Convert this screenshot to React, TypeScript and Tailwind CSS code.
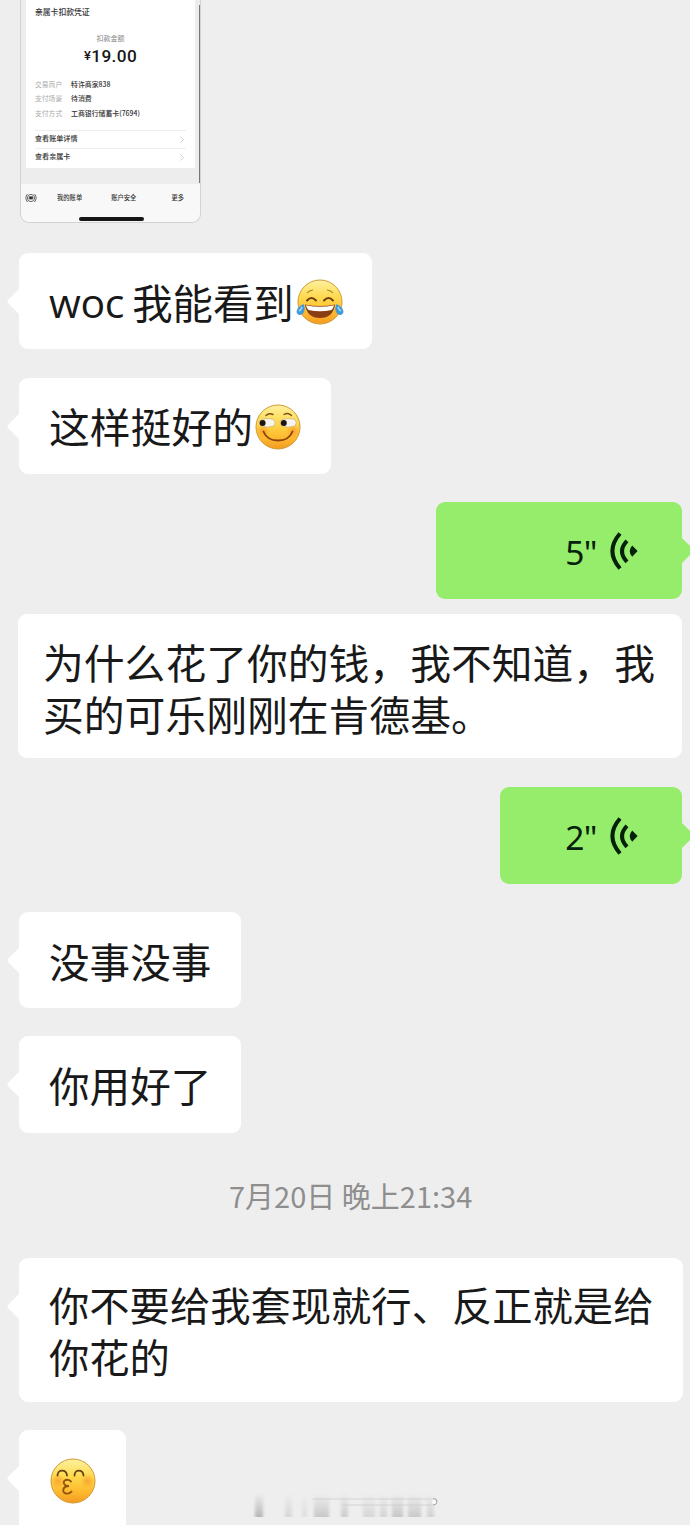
import type { ReactNode } from "react";

const rows = [
  { label: "交易商户", value: "特许商家838" },
  { label: "支付场景", value: "待消费" },
  { label: "支付方式", value: "工商银行储蓄卡(7694)" },
];

const links = ["查看账单详情", "查看亲属卡"];

function LeftBubble({
  children,
  className = "",
  tail = true,
}: {
  children: ReactNode;
  className?: string;
  tail?: boolean;
}) {
  return (
    <div
      className={[
        "relative shrink-0 rounded-[9px] bg-white leading-[52px] text-[#191919]",
        className,
      ].join(" ")}
    >
      {tail && (
        <svg
          className="absolute -left-3 top-[35px]"
          width="13"
          height="28"
          viewBox="0 0 13 28"
        >
          <path d="M13 0 L1.5 11.5 Q-.5 13.5 1.5 15.5 L13 27Z" fill="#fff" />
        </svg>
      )}
      {children}
    </div>
  );
}

function VoiceBubble({ seconds, className }: { seconds: number; className: string }) {
  return (
    <div
      className={[
        "relative mr-2 flex h-[97px] shrink-0 items-center justify-end self-end rounded-[9px] bg-[#95ed6b] pr-[43px] text-[#06210a]",
        className,
      ].join(" ")}
    >
      <span className="pt-[3px] font-['Noto_Sans',sans-serif] text-[33.5px] leading-10 tracking-[-0.5px]">
        {seconds}"
      </span>
      <svg className="ml-3" width="30" height="40" viewBox="0 0 30 40" fill="none">
        <path d="M11 2.5 Q-4.2 20 11 37.5" stroke="currentColor" strokeWidth="4" />
        <path d="M18 9.8 Q8 20 18 30.8" stroke="currentColor" strokeWidth="4" />
        <path d="M23.2 14.5 L28.6 20 L23.2 25.8 Q18.2 20 23.2 14.5Z" fill="currentColor" />
      </svg>
      <svg
        className="absolute -right-3 top-[35px]"
        width="13"
        height="28"
        viewBox="0 0 13 28"
      >
        <path d="M0 0 L11.5 11.5 Q13.5 13.5 11.5 15.5 L0 27Z" fill="#95ed6b" />
      </svg>
    </div>
  );
}

function FaceBase({ id }: { id: string }) {
  return (
    <>
      <defs>
        <linearGradient id={id} x1="0" y1="0" x2="0" y2="1">
          <stop offset="0" stopColor="#fdf1a0" />
          <stop offset=".4" stopColor="#fed94c" />
          <stop offset=".75" stopColor="#fdb92e" />
          <stop offset="1" stopColor="#f39a22" />
        </linearGradient>
        <radialGradient id={id + "-blush"}>
          <stop offset="0" stopColor="#f77b1c" stopOpacity=".5" />
          <stop offset="1" stopColor="#f77b1c" stopOpacity="0" />
        </radialGradient>
      </defs>
      <circle cx="24" cy="24" r="22" fill={`url(#${id})`} stroke="#d19a36" strokeWidth="1" />
    </>
  );
}

function JoyFace() {
  return (
    <svg className="ml-0.5 mt-0.5 shrink-0" width="48" height="48" viewBox="0 0 48 48" fill="none">
      <FaceBase id="joy" />
      <path d="M11 15 Q13 12.5 17 12M31 12 Q35 12.5 37 15" stroke="#b97a24" strokeWidth="1.2" />
      <path
        d="M11 22.5 Q15.5 17.5 20 22.5M28 22.5 Q32.5 17.5 37 22.5"
        stroke="#704015"
        strokeWidth="2"
        strokeLinecap="round"
      />
      <path d="M9 26.5 Q24 29.5 39 26.5 Q37 40 24 40 Q11 40 9 26.5Z" fill="#8a3d12" />
      <path d="M10 27.2 Q24 30.2 38 27.2 Q37.3 30.5 35.5 32 Q24 34.5 12.5 32 Q10.7 30.5 10 27.2Z" fill="#fff" />
      <path d="M7.5 26 Q10.5 32 6.5 36 Q2.5 38.5 .8 35 Q-.5 30 7.5 26Z" fill="#439ad9" />
      <path d="M40.5 26 Q37.5 32 41.5 36 Q45.5 38.5 47.2 35 Q48.5 30 40.5 26Z" fill="#439ad9" />
      <path d="M6 29 Q5 32 3 33M42 29 Q43 32 45 33" stroke="#a3d6f5" strokeWidth="1.6" />
    </svg>
  );
}

function SmirkFace() {
  return (
    <svg className="ml-px mt-0.5 shrink-0" width="48" height="48" viewBox="0 0 48 48" fill="none">
      <FaceBase id="smirk" />
      <circle cx="9" cy="28" r="7" fill="url(#smirk-blush)" />
      <circle cx="39" cy="28" r="7" fill="url(#smirk-blush)" />
      <path
        d="M12 12.5 Q15 9.5 19 11.5M30 11.5 Q34 9 37.5 12.5"
        stroke="#80501b"
        strokeWidth="1.4"
        strokeLinecap="round"
      />
      <path d="M5 18 Q12 14 19.5 16.5 Q22.5 19.5 20 23 Q13 25.5 6 22.5Z" fill="#f6f4ec" stroke="#cfae74" strokeWidth=".7" />
      <path d="M26 18 Q33 14 41 16.5 Q43.5 19.5 41 23 Q34 25.5 27 22.5Z" fill="#f6f4ec" stroke="#cfae74" strokeWidth=".7" />
      <circle cx="8.6" cy="20" r="3" fill="#1e160e" />
      <circle cx="29.8" cy="20" r="3" fill="#1e160e" />
      <path
        d="M9.5 28.5 Q13 37.5 24 37.5 Q35 37.5 38.5 28.5"
        stroke="#8b420f"
        strokeWidth="1.8"
        strokeLinecap="round"
      />
    </svg>
  );
}

function KissFace() {
  return (
    <svg className="mb-0.5 shrink-0" width="48" height="48" viewBox="0 0 48 48" fill="none">
      <FaceBase id="kiss" />
      <circle cx="9" cy="24" r="7" fill="url(#kiss-blush)" />
      <circle cx="38.5" cy="24" r="7" fill="url(#kiss-blush)" />
      <path
        d="M8.5 18.5 C8.5 12 17.5 12 18 18.5M25.5 18.5 C25.5 12 34 12 34.5 18.5"
        stroke="#66430f"
        strokeWidth="1.8"
        strokeLinecap="round"
      />
      <path
        d="M22 24.5 C18.5 21.3 13.8 23 15 26.6 Q16.2 29.2 20 29 C13.5 29 12.5 35.5 17 36.5 Q20.5 37.2 22.5 34.5"
        stroke="#93540f"
        strokeWidth="1.9"
        strokeLinecap="round"
      />
    </svg>
  );
}

// 画面上端で切れている支付カード
function PayCard() {
  return (
    <div className="relative ml-5 h-[223px] w-[181px] shrink-0 overflow-hidden rounded-b-[9px] border border-t-0 border-[#d2d2d2] bg-[#f8f8f8] text-[#333]">
      <div className="h-[184px] bg-[#ededed] px-[5px]">
        <div className="h-[168px] bg-white px-[9px] pt-[6px]">
          <p className="text-[7.8px] font-medium leading-3">亲属卡扣款凭证</p>
          <p className="mt-[14px] text-center text-[7px] leading-3 text-[#888]">扣款金额</p>
          <p className="mt-[2px] text-center font-['Roboto',sans-serif] text-[17.2px] font-medium leading-5 tracking-[0.4px] text-[#171717]">
            <span className="relative -top-0.5 text-[13px]">¥</span>19.00
          </p>
          <dl className="mt-[9px]">
            {rows.map((r) => (
              <div key={r.label} className="flex h-[14.5px] items-center leading-none">
                <dt className="w-9 text-[6.8px] text-[#aaa]">{r.label}</dt>
                <dd className="whitespace-nowrap text-[6.9px] font-medium">{r.value}</dd>
              </div>
            ))}
          </dl>
          <ul className="mt-[9px]">
            {links.map((l) => (
              <li
                key={l}
                className="flex h-[18px] items-center justify-between border-t border-[#eee] pr-0.5 text-[7.1px] font-medium leading-none"
              >
                {l}
                <svg width="4" height="7" viewBox="0 0 4 7" fill="none" stroke="#c4c4c4" strokeWidth=".8">
                  <path d="M.5.5 L3.5 3.5 L.5 6.5" />
                </svg>
              </li>
            ))}
          </ul>
        </div>
      </div>
      <div className="flex h-[27px] items-center pl-1 text-[6.3px] font-medium">
        <svg width="12" height="10" viewBox="0 0 12 10" fill="none" stroke="#444" strokeWidth=".8">
          <path d="M2.5 1 Q-.8 5 2.5 9M9.5 1 Q12.8 5 9.5 9" />
          <circle cx="6" cy="5" r="3.6" />
          <path d="M4.3 3.8h3.4v2.2H4.3z" fill="#333" />
        </svg>
        <span className="ml-5">我的账单</span>
        <span className="ml-[29px]">账户安全</span>
        <span className="ml-[35px]">更多</span>
      </div>
      <div className="ml-[58px] mt-[6px] h-[3.5px] w-[65px] rounded-full bg-[#151515]" />
      <div className="absolute right-0 top-[5px] h-[178px] w-px bg-[#777]" />
    </div>
  );
}

// 下端のかすれた跡: x, 幅, 濃さ
const smudges = [
  [3, 8, 0.6],
  [33, 7, 0.25],
  [50, 5, 0.17],
  [62, 15, 0.4],
  [89, 7, 0.35],
  [111, 12, 0.25],
  [128, 7, 0.28],
  [140, 11, 0.42],
  [156, 13, 0.38],
  [175, 7, 0.3],
];

function FadedMark() {
  return (
    <svg
      className="absolute left-[252px] top-[1490px]"
      width="190"
      height="32"
      viewBox="0 0 190 32"
      fill="none"
    >
      <defs>
        <linearGradient id="fade" x1="0" y1="0" x2="0" y2="1">
          <stop offset="0" stopColor="#999" stopOpacity="0" />
          <stop offset="1" stopColor="#8f8f8f" />
        </linearGradient>
        <filter id="soft">
          <feGaussianBlur stdDeviation="1.8 .7" />
        </filter>
      </defs>
      <g filter="url(#soft)">
        {smudges.map(([x, w, o]) => (
          <rect key={x} x={x} y="3" width={w} height="24" fill="url(#fade)" opacity={o} />
        ))}
        <path d="M60 9 H180M90 15 H180" stroke="#ccc" strokeWidth=".8" />
      </g>
      <path d="M181 8.5 Q186 9 184.5 13 Q183.5 15 181 15" stroke="#aaa" strokeWidth="1.2" />
      <circle cx="182" cy="12" r="2" fill="#fafafa" />
    </svg>
  );
}

export default function App() {
  return (
    <main className="relative flex h-[1525px] w-[690px] flex-col overflow-hidden bg-[#eeeeee] font-['Noto_Sans_CJK_SC',sans-serif]">
      <PayCard />

      <LeftBubble className="ml-[19px] mt-[30px] flex h-24 w-[353px] items-center pl-[30px] text-[40.4px]">
        <span className="mr-2 pt-0.5 font-['Open_Sans',sans-serif] text-[41px] tracking-[-0.3px]">woc</span>
        <span className="pt-0.5">我能看到</span>
        <JoyFace />
      </LeftBubble>

      <LeftBubble className="ml-[19px] mt-[29px] flex h-24 w-[312px] items-center pl-[30px] text-[40.8px]">
        <span>这样挺好的</span>
        <SmirkFace />
      </LeftBubble>

      <VoiceBubble seconds={5} className="mt-7 w-[246px]" />

      <LeftBubble
        tail={false}
        className="ml-[18px] mt-[15px] h-36 w-[664px] pl-[25px] pt-[22px] text-[40.8px]"
      >
        <p>为什么花了你的钱，我不知道，我买的可乐刚刚在肯德基。</p>
      </LeftBubble>

      <VoiceBubble seconds={2} className="mt-[29px] w-[182px]" />

      <LeftBubble className="ml-[19px] mt-7 h-24 w-[222px] pl-[30px] pt-[23px] text-[40.6px]">
        没事没事
      </LeftBubble>

      <LeftBubble className="ml-[19px] mt-7 h-[97px] w-[222px] pl-[30px] pt-[23px] text-[40.6px]">
        你用好了
      </LeftBubble>

      <p className="mb-0.5 ml-[229px] mt-[42px] h-10 shrink-0 whitespace-nowrap text-[29px] leading-10 text-[#8e8e8e]">
        7月20日 晚上21:34
      </p>

      <LeftBubble className="ml-[19px] mt-[41px] h-36 w-[664px] pl-[30px] pt-5 text-[40.3px]">
        <p>你不要给我套现就行、反正就是给你花的</p>
      </LeftBubble>

      <LeftBubble className="ml-[19px] mt-7 flex h-[104px] w-[107px] items-center justify-center">
        <KissFace />
      </LeftBubble>

      <FadedMark />
    </main>
  );
}
